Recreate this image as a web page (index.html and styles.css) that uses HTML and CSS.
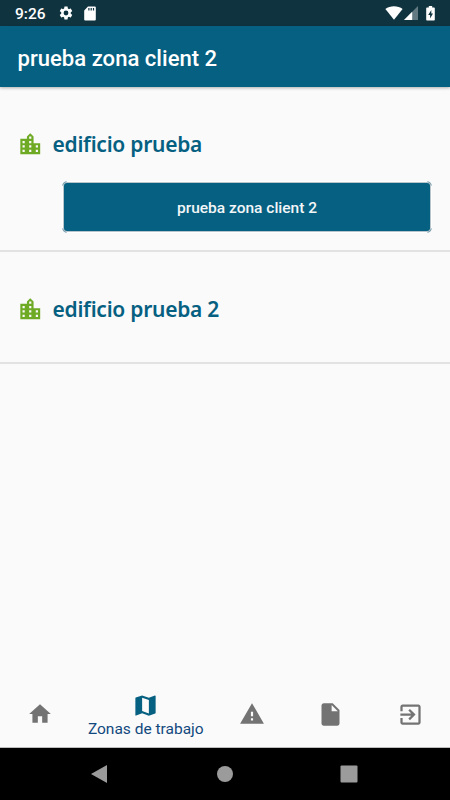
FILE: index.html
```html
<!DOCTYPE html>
<html lang="es">
<head>
<meta charset="utf-8">
<title>prueba zona client 2</title>
<link rel="stylesheet" href="styles.css">
</head>
<body>
<div class="status">
  <span class="clock">9:26</span>
  <svg class="gear" viewBox="0 0 24 24"><path d="M19.14 12.94c.04-.3.06-.61.06-.94s-.02-.64-.07-.94l2.03-1.58c.18-.14.23-.41.12-.61l-1.92-3.32c-.12-.22-.37-.29-.59-.22l-2.39.96c-.5-.38-1.03-.7-1.62-.94l-.36-2.54c-.04-.24-.24-.41-.48-.41h-3.84c-.24 0-.43.17-.47.41l-.36 2.54c-.59.24-1.13.57-1.62.94l-2.39-.96c-.22-.08-.47 0-.59.22L2.74 8.87c-.12.21-.08.47.12.61l2.03 1.58c-.05.3-.09.63-.09.94s.02.64.07.94l-2.03 1.58c-.18.14-.23.41-.12.61l1.92 3.32c.12.22.37.29.59.22l2.39-.96c.5.38 1.03.7 1.62.94l.36 2.54c.05.24.24.41.48.41h3.84c.24 0 .44-.17.47-.41l.36-2.54c.59-.24 1.13-.56 1.62-.94l2.39.96c.22.08.47 0 .59-.22l1.92-3.32c.12-.22.07-.47-.12-.61zM12 15.6A3.6 3.6 0 1 1 12 8.4a3.6 3.6 0 0 1 0 7.2z"/></svg>
  <svg class="sd" viewBox="0 0 12 15"><path d="M4 .5h6.8a1 1 0 0 1 1 1v12a1 1 0 0 1-1 1H1.2a1 1 0 0 1-1-1V4.500z"/><path class="slots" d="M4.300 2h1.200v2.500H4.300zM6.600 2h1.200v2.500H6.600zM8.900 2h1.200v2.500H8.900z"/></svg>
  <span class="spacer"></span>
  <svg class="wifi" viewBox="0 0 18 14"><path d="M9 13.700L.4 3C5-.6 13-.6 17.600 3z"/></svg>
  <svg class="signal" viewBox="0 0 14 14"><path class="dim" d="M14 0v14H0z"/><path d="M8.200 5.800V14H0z"/></svg>
  <svg class="battery" viewBox="0 0 9 15"><path d="M2.800 0h3.400v1.500H8a.8.8 0 0 1 .8.8v11.400a.8.8 0 0 1-.8.8H1a.8.8 0 0 1-.8-.8V2.300a.8.8 0 0 1 .8-.8h1.800z"/><path class="bolt" d="M5.300 4L2.200 9h1.900v3.500L7 7.500H5.300z"/></svg>
</div>
<header class="appbar">prueba zona client 2</header>
<main>
  <section class="building first">
    <h2><svg viewBox="0 0 24 24"><path d="M15 11V5l-3-3-3 3v2H3v14h18V11h-6zm-8 8H5v-2h2v2zm0-4H5v-2h2v2zm0-4H5V9h2v2zm6 8h-2v-2h2v2zm0-4h-2v-2h2v2zm0-4h-2V9h2v2zm0-4h-2V5h2v2zm6 12h-2v-2h2v2zm0-4h-2v-2h2v2z"/></svg><span>edificio prueba</span></h2>
    <button class="zone">prueba zona client 2<svg class="corners" viewBox="0 0 370 52"><path d="M.5 4.500Q1 1 4.500.5M365.500.5Q369 1 369.500 4.500M369.500 47.500Q369 51 365.500 51.500M4.500 51.500Q1 51 .5 47.500"/></svg></button>
  </section>
  <section class="building second">
    <h2><svg viewBox="0 0 24 24"><path d="M15 11V5l-3-3-3 3v2H3v14h18V11h-6zm-8 8H5v-2h2v2zm0-4H5v-2h2v2zm0-4H5V9h2v2zm6 8h-2v-2h2v2zm0-4h-2v-2h2v2zm0-4h-2V9h2v2zm0-4h-2V5h2v2zm6 12h-2v-2h2v2zm0-4h-2v-2h2v2z"/></svg><span>edificio prueba 2</span></h2>
  </section>
</main>
<nav class="tabs">
  <a class="tab"><svg class="small" viewBox="0 0 24 24"><path d="M10 20v-6h4v6h5v-8h3L12 3 2 12h3v8z"/></svg></a>
  <a class="tab active"><svg viewBox="0 0 24 24"><path d="M20.500 3l-.16.03L15 5.100 9 3 3.360 4.900c-.21.07-.36.25-.36.48V20.500c0 .28.22.5.5.5l.16-.03L9 18.900l6 2.100 5.640-1.900c.21-.07.36-.25.36-.48V3.500c0-.28-.22-.5-.5-.5zM15 19l-6-2.110V5l6 2.110V19z"/></svg><span>Zonas de trabajo</span></a>
  <a class="tab"><svg class="small" viewBox="0 0 24 24"><path d="M1 21h22L12 2 1 21zm12-3h-2v-2h2v2zm0-4h-2v-4h2v4z"/></svg></a>
  <a class="tab"><svg viewBox="0 0 24 24"><path d="M6 2c-1.100 0-1.990.9-1.990 2L4 20c0 1.100.89 2 1.990 2H18c1.100 0 2-.9 2-2V8l-6-6H6zm7 7V3.500L18.500 9H13z"/></svg></a>
  <a class="tab"><svg viewBox="0 0 24 24"><path d="M10.090 15.590L11.500 17l5-5-5-5-1.410 1.410L12.670 11H3v2h9.670l-2.580 2.590zM19 3H5c-1.110 0-2 .9-2 2v4h2V5h14v14H5v-4H3v4c0 1.100.89 2 2 2h14c1.100 0 2-.9 2-2V5c0-1.100-.9-2-2-2z"/></svg></a>
</nav>
<footer class="system">
  <svg viewBox="0 0 20 20"><path d="M17 1v18L1 10z"/></svg>
  <svg viewBox="0 0 20 20"><circle cx="10" cy="10" r="8"/></svg>
  <svg viewBox="0 0 20 20"><rect x="1.500" y="1.500" width="17" height="17" rx="1"/></svg>
</footer>
</body>
</html>
```

FILE: styles.css
```css
* { box-sizing: border-box; }
body {
  margin: 0;
  width: 450px;
  height: 800px;
  display: flex;
  flex-direction: column;
  background: #fafafa;
  font-family: Roboto, sans-serif;
  overflow: hidden;
}
svg { display: block; flex: none; fill: currentColor; }
.status {
  height: 26px;
  flex: none;
  display: flex;
  align-items: center;
  padding: 0 15px;
  background: #10343f;
  color: #fff;
}
.clock { width: 42.500px; font-size: 15.500px; font-weight: 500; line-height: 26px; padding-top: 2px; }
.gear { width: 16px; height: 16px; margin-right: 10px; }
.sd { width: 12px; height: 15px; }
.slots, .bolt { fill: #10343f; }
.spacer { flex: 1; }
.wifi { width: 18px; height: 14px; margin-right: 1px; }
.signal { width: 14px; height: 14px; margin-right: 8px; }
.dim { opacity: .35; }
.battery { width: 9px; height: 15px; }
.appbar {
  height: 61px;
  flex: none;
  padding: 2px 17.500px 0;
  background: #066081;
  color: #fff;
  font-size: 22.100px;
  font-weight: 500;
  line-height: 61px;
  box-shadow: 0 1px 3px rgba(0, 0, 0, .3);
}
main { flex: 1; }
.building { border-bottom: 2px solid #e2e2e2; }
.first { height: 165px; padding-top: 42px; }
.second { height: 112px; padding-top: 42px; }
h2 {
  display: flex;
  align-items: center;
  height: 30px;
  margin: 0 0 0 17px;
  color: #066081;
  font: 600 21px/30px "Noto Sans", sans-serif;
  letter-spacing: -.25px;
}
h2 svg { width: 26.500px; height: 26.500px; color: #6eaa24; }
h2 span { margin-left: 9px; }
.zone {
  position: relative;
  display: block;
  width: 366px;
  height: 48px;
  margin: 24px 0 0 64px;
  padding: 1px 0 0;
  border: 0;
  border-radius: 3px;
  background: #066081;
  color: #f3f6f8;
  font: 500 15.500px Roboto, sans-serif;
  box-shadow: 0 0 0 1px #b9c5cc, 0 0 0 2px #fff;
}
.corners {
  position: absolute;
  left: -2px;
  top: -2px;
  width: 370px;
  height: 52px;
  fill: none;
  stroke: #789eae;
  stroke-width: 1;
}
.tabs {
  height: 67px;
  flex: none;
  display: grid;
  grid-template-columns: 79.500px 132.500px 79px 79px 80px;
  border-bottom: 1px solid #bdbdbd;
  color: #737373;
}
.tab { display: flex; flex-direction: column; align-items: center; padding-top: 20px; }
.tab svg { width: 27px; height: 27px; }
.tab .small { width: 26px; height: 26px; }
.active { padding-top: 11px; color: #066081; }
.active span { color: #12497e; font-size: 15.500px; line-height: 21px; white-space: nowrap; }
.system {
  height: 52px;
  flex: none;
  display: flex;
  justify-content: space-between;
  align-items: center;
  padding: 0 91px 0 90px;
  background: #000;
  color: #9b9b9b;
}
.system svg { width: 20px; height: 20px; }
```
